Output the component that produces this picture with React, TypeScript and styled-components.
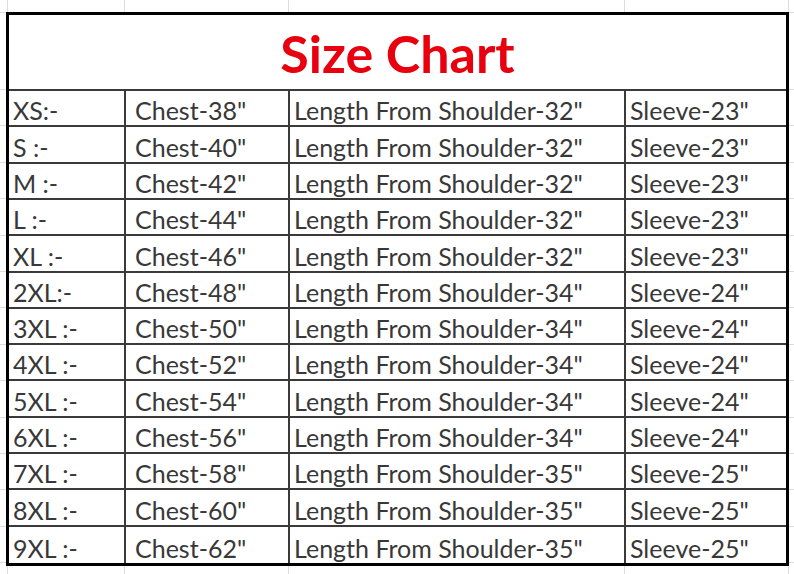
import React from "react"
import styled, { createGlobalStyle } from "styled-components"

// Data
const rows = [
	["XS:-", "38", "32", "23"],
	["S :-", "40", "32", "23"],
	["M :-", "42", "32", "23"],
	["L :-", "44", "32", "23"],
	["XL :-", "46", "32", "23"],
	["2XL:-", "48", "34", "24"],
	["3XL :-", "50", "34", "24"],
	["4XL :-", "52", "34", "24"],
	["5XL :-", "54", "34", "24"],
	["6XL :-", "56", "34", "24"],
	["7XL :-", "58", "35", "25"],
	["8XL :-", "60", "35", "25"],
	["9XL :-", "62", "35", "25"],
]

const GRID = "#dcdcdc"

const GlobalStyle = createGlobalStyle`
	html, body {
		margin: 0;
		padding: 0;
	}
	body {
		min-height: 574px;
		background-color: #fff;
		/* spreadsheet gridlines behind the chart */
		background-image:
			linear-gradient(${GRID}, ${GRID}),
			linear-gradient(${GRID}, ${GRID}),
			linear-gradient(${GRID}, ${GRID}),
			linear-gradient(${GRID}, ${GRID}),
			linear-gradient(${GRID}, ${GRID}),
			linear-gradient(${GRID}, ${GRID}),
			repeating-linear-gradient(to bottom, ${GRID} 0 1px, transparent 1px 36.4px);
		background-size: 1px 100%, 1px 100%, 1px 100%, 1px 100%, 1px 100%, 100% 1px, 100% 480px;
		background-position: 7px 0, 124px 0, 288px 0, 624px 0, 788px 0, 0 12px, 0 89px;
		background-repeat: no-repeat;
	}
`

const Sheet = styled.main`
	padding: 12px 5px 0 6px;
`

const Chart = styled.section`
	box-sizing: border-box;
	width: 783px;
	height: 554px;
	border: 3px solid #000;
	background: #fff;
	display: grid;
	grid-template-columns: 117px 164px 336px 160px;
	grid-template-rows: 76px repeat(13, 1fr);
	font-family: Lato, "Open Sans", sans-serif;
	color: #383838;
`

const Title = styled.h1`
	grid-column: 1 / -1;
	margin: 0;
	border-bottom: 2px solid #3a3a3a;
	display: flex;
	align-items: center;
	justify-content: center;
	padding-top: 2px;
	font-size: 52px;
	font-weight: 700;
	color: #e8000f;
`

const Cell = styled.div<{ $indent: number; $last?: boolean; $bottom?: boolean }>`
	box-sizing: border-box;
	display: flex;
	align-items: flex-end;
	padding: 0 0 2px ${({ $indent }) => $indent}px;
	border-right: ${({ $last }) => ($last ? "none" : "2px solid #3a3a3a")};
	border-bottom: ${({ $bottom }) => ($bottom ? "none" : "2px solid #3a3a3a")};
	font-size: 25px;
	line-height: 1;
	white-space: nowrap;
`

const App = () => {
	return (
		<>
			<GlobalStyle />
			<Sheet>
				<Chart>
					<Title>Size Chart</Title>
					{rows.map(([size, chest, length, sleeve], i) => {
						const bottom = i === rows.length - 1
						return (
							<React.Fragment key={size}>
								<Cell $indent={4} $bottom={bottom}>{size}</Cell>
								<Cell $indent={9} $bottom={bottom}>Chest-{chest}"</Cell>
								<Cell $indent={4} $bottom={bottom}>Length From Shoulder-{length}"</Cell>
								<Cell $indent={4} $last $bottom={bottom}>Sleeve-{sleeve}"</Cell>
							</React.Fragment>
						)
					})}
				</Chart>
			</Sheet>
		</>
	)
}

export default App
